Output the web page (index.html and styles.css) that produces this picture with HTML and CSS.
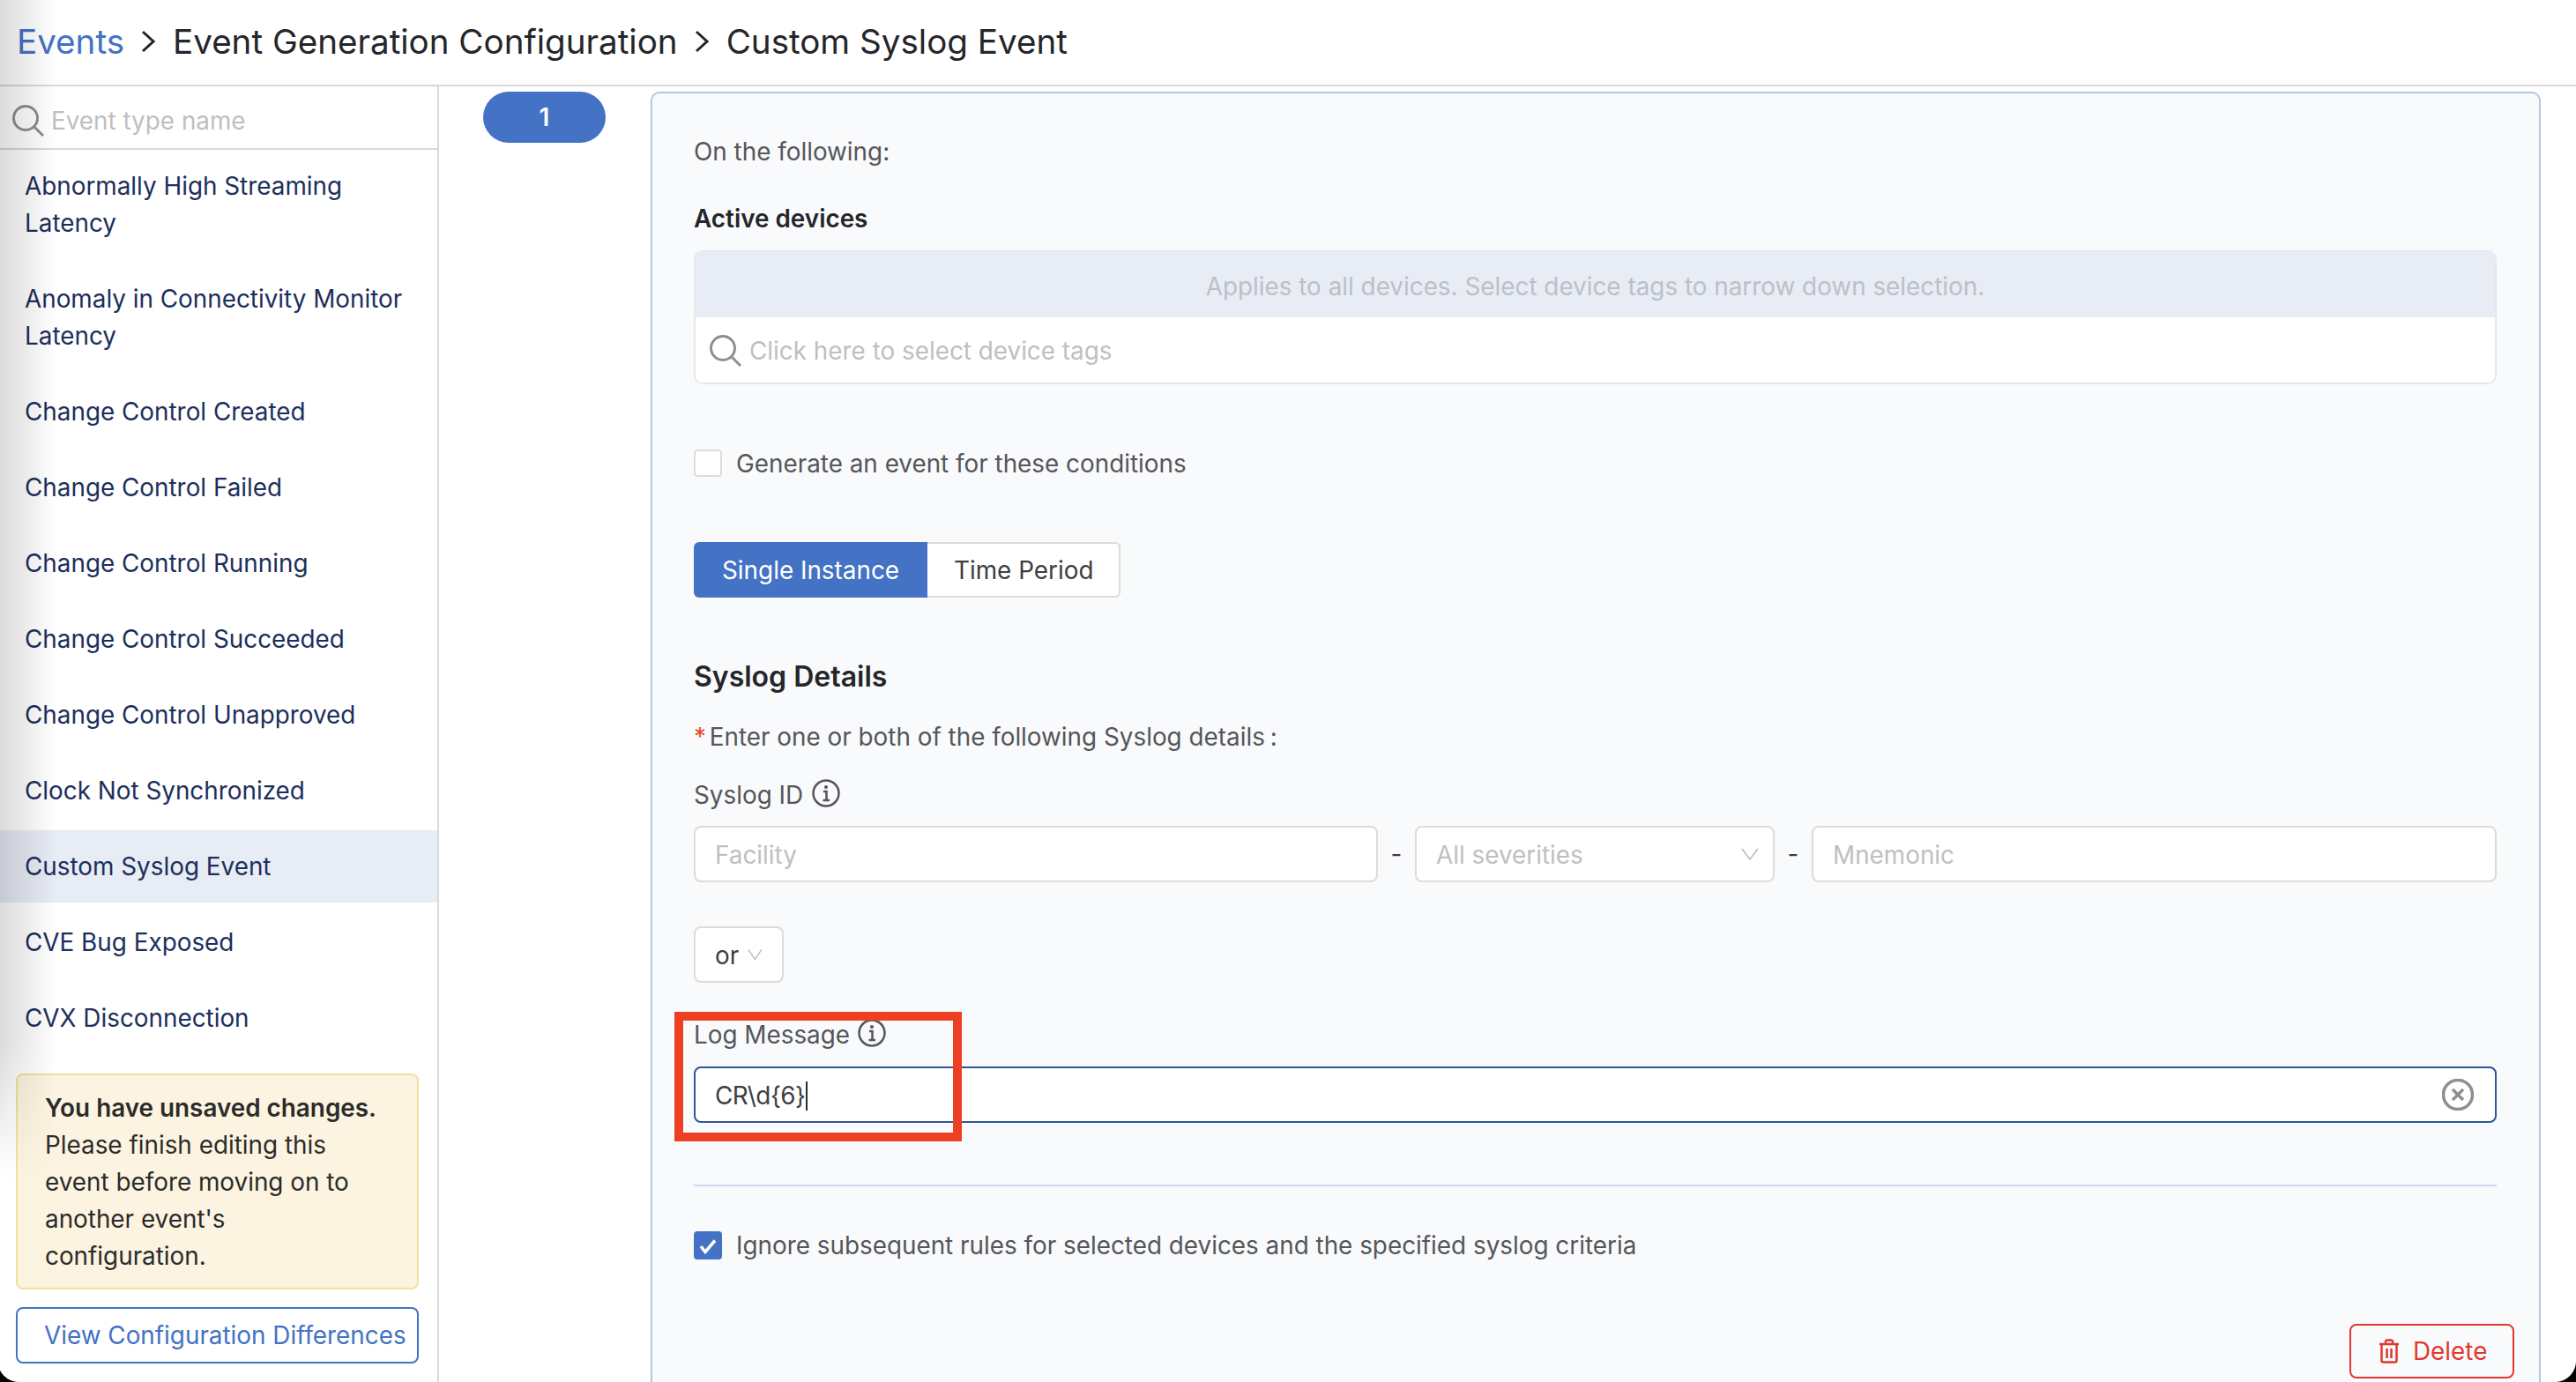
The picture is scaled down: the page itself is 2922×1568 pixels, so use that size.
FILE: index.html
```html
<!DOCTYPE html>
<html>
<head>
  <meta charset="utf-8">
  <title>Custom Syslog Event</title>
  <link rel="stylesheet" href="styles.css">
</head>
<body>
  <div class="app">
    <div class="crumbs">
      <span class="crumb-link">Events</span>
      <svg class="crumb-sep" viewBox="0 0 16 26"><path d="M2 2l12 11L2 24"/></svg>
      <span>Event Generation Configuration</span>
      <svg class="crumb-sep" viewBox="0 0 16 26"><path d="M2 2l12 11L2 24"/></svg>
      <span>Custom Syslog Event</span>
    </div>

    <div class="main">
      <div class="sidebar">
        <div class="side-search">
          <svg class="search-icon" viewBox="0 0 36 36"><circle cx="15" cy="15" r="13.5"/><path d="M25 25l10 10"/></svg>
          <span class="placeholder">Event type name</span>
        </div>
        <div class="event-list">
          <div class="event-row">Abnormally High Streaming Latency</div>
          <div class="event-row">Anomaly in Connectivity Monitor Latency</div>
          <div class="event-row">Change Control Created</div>
          <div class="event-row">Change Control Failed</div>
          <div class="event-row">Change Control Running</div>
          <div class="event-row">Change Control Succeeded</div>
          <div class="event-row">Change Control Unapproved</div>
          <div class="event-row">Clock Not Synchronized</div>
          <div class="event-row selected">Custom Syslog Event</div>
          <div class="event-row">CVE Bug Exposed</div>
          <div class="event-row">CVX Disconnection</div>
        </div>
        <div class="notice">
          <b>You have unsaved changes.</b><br>
          Please finish editing this event before moving on to another event's configuration.
        </div>
        <div class="diff-btn">View Configuration Differences</div>
      </div>

      <div class="steps">
        <div class="step-pill">1</div>
      </div>

      <div class="panel">
        <div class="line">On the following:</div>
        <div class="line strong active-title">Active devices</div>

        <div class="device-box">
          <div class="device-hint">Applies to all devices. Select device tags to narrow down selection.</div>
          <div class="device-search">
            <svg class="search-icon" viewBox="0 0 36 36"><circle cx="15" cy="15" r="13.5"/><path d="M25 25l10 10"/></svg>
            <span class="placeholder">Click here to select device tags</span>
          </div>
        </div>

        <div class="check-row generate-row">
          <span class="checkbox"></span>
          <span>Generate an event for these conditions</span>
        </div>

        <div class="toggle">
          <div class="toggle-on">Single Instance</div>
          <div class="toggle-off">Time Period</div>
        </div>

        <div class="section-title">Syslog Details</div>
        <div class="line required-line"><span class="star">*</span> Enter one or both of the following Syslog details<span class="colon">:</span></div>

        <div class="line field-label syslog-label">
          Syslog ID
          <svg class="info" viewBox="0 0 32 32"><circle cx="16" cy="16" r="14.5"/><circle class="info-dot" cx="16" cy="9" r="2"/><path d="M13 14h3.500v10M12.500 24h7.500"/></svg>
        </div>

        <div class="syslog-fields">
          <div class="input grow"><span class="placeholder">Facility</span></div>
          <span class="dash">-</span>
          <div class="input severity">
            <span class="placeholder">All severities</span>
            <svg class="chevron" viewBox="0 0 20 14"><path d="M1 1l9 12 9-12"/></svg>
          </div>
          <span class="dash">-</span>
          <div class="input mnemonic"><span class="placeholder">Mnemonic</span></div>
        </div>

        <div class="input or-select">
          <span>or</span>
          <svg class="chevron small" viewBox="0 0 18 14"><path d="M1 1l8 12 8-12"/></svg>
        </div>

        <div class="log-field">
          <div class="line field-label log-label">
            Log Message
            <svg class="info" viewBox="0 0 32 32"><circle cx="16" cy="16" r="14.5"/><circle class="info-dot" cx="16" cy="9" r="2"/><path d="M13 14h3.500v10M12.500 24h7.500"/></svg>
          </div>
          <div class="input focused">
            <span class="log-value">CR\d{6}</span><span class="caret"></span>
            <svg class="clear-icon" viewBox="0 0 36 36"><circle cx="18" cy="18" r="16.500"/><path d="M12 12l12 12M24 12L12 24"/></svg>
          </div>
          <div class="callout"></div>
        </div>

        <div class="divider"></div>

        <div class="check-row ignore-row">
          <span class="checkbox checked">
            <svg viewBox="0 0 32 32"><path d="M8 17l5 6.500 11-13"/></svg>
          </span>
          <span>Ignore subsequent rules for selected devices and the specified syslog criteria</span>
        </div>

        <div class="delete-wrap">
          <div class="delete-btn">
            <svg class="trash" viewBox="0 0 24 28"><path d="M1 6h22M8 6V3.500C8 2 9 1.500 10 1.500h4c1 0 2 .5 2 2V6M3.500 6v18.500c0 1 .7 2 2 2h13c1.300 0 2-1 2-2V6M9.500 11v11M14.500 11v11"/></svg>
            <span>Delete</span>
          </div>
        </div>
      </div>
    </div>
  </div>

  <div class="edge-shadow"></div>
  <div class="corner corner-left"></div>
  <div class="corner corner-right"></div>
</body>
</html>
```

FILE: styles.css
```css
* { box-sizing: border-box; }

html, body {
  margin: 0;
  height: 100%;
  overflow: hidden;
  background: #fff;
}

body {
  position: relative;
  font-family: "Inter", "Liberation Sans", sans-serif;
  font-size: 27.85px;
  line-height: 42px;
  color: #55565a;
}

.app {
  display: flex;
  flex-direction: column;
  height: 1568px;
}

/* breadcrumb */
.crumbs {
  display: flex;
  align-items: center;
  height: 98px;
  padding: 0 0 2px 19px;
  border-bottom: 2px solid #d9d9d9;
  font-size: 38.6px;
  color: #25262a;
}
.crumb-link { color: #4472c4; }
.crumb-sep {
  width: 16px;
  height: 26px;
  margin: 0 20px 0 19px;
  fill: none;
  stroke: #25262a;
  stroke-width: 3;
}

.main {
  display: flex;
  flex: 1;
  min-height: 0;
  overflow: hidden;
}

/* left column */
.sidebar {
  display: flex;
  flex-direction: column;
  flex: 0 0 498px;
  padding-bottom: 21px;
  border-right: 2px solid #d9d9d9;
}
.side-search {
  display: flex;
  align-items: center;
  flex: 0 0 72px;
  padding: 8px 0 0 14px;
  border-bottom: 2px solid #d9d9d9;
}
.search-icon {
  width: 36px;
  height: 36px;
  fill: none;
  stroke: #8f8f8f;
  stroke-width: 3;
}
.side-search .placeholder { margin-left: 8px; }
.placeholder { color: #bfbfbf; }

.event-list {
  display: flex;
  flex-direction: column;
  flex: 1;
  gap: 4px;
  overflow: hidden;
}
.event-row {
  padding: 20px 28px;
  color: #1c2f5c;
}
.event-row.selected { background: #e8ecf5; }

.notice {
  margin: 0 21px 0 18px;
  padding: 16px 28px 15px 31px;
  background: #fcf4e0;
  border: 2px solid #f3e09c;
  border-radius: 8px;
  color: #2b2b2b;
}
.notice b { font-weight: 600; }

.diff-btn {
  display: flex;
  align-items: center;
  height: 64px;
  margin: 20px 21px 0 18px;
  padding-left: 30px;
  border: 2px solid #4472c4;
  border-radius: 8px;
  color: #4472c4;
  white-space: nowrap;
}

/* step column */
.steps {
  flex: 0 0 240px;
  padding: 6px 0 0 50px;
}
.step-pill {
  display: flex;
  align-items: center;
  justify-content: center;
  width: 139px;
  height: 58px;
  border-radius: 29px;
  background: #4472c4;
  color: #fff;
  font-weight: 600;
}

/* main panel */
.panel {
  flex: 0 0 1144px;
  flex-grow: 1;
  height: 1500px;
  margin: 6px 40px 0 0;
  padding: 45px 48px 0 47px;
  background: #f9fafc;
  border: 2px solid #b3c6e8;
  border-radius: 10px;
}
.strong { font-weight: 600; color: #25262a; }
.active-title { margin-top: 34px; }

.device-box {
  margin-top: 15px;
  height: 152px;
  border: 2px solid #e6e8ec;
  border-radius: 10px;
  background: #fff;
  overflow: hidden;
}
.device-hint {
  height: 74px;
  padding-top: 18px;
  background: #e8ecf5;
  color: #bcc0c8;
  text-align: center;
}
.device-search {
  display: flex;
  align-items: center;
  height: 74px;
  padding: 2px 0 0 16px;
}
.device-search .placeholder { margin-left: 9px; }

.check-row {
  display: flex;
  align-items: center;
  gap: 16px;
}
.generate-row { margin-top: 74px; height: 31px; }
.checkbox {
  flex: 0 0 32px;
  height: 31px;
  background: #fff;
  border: 2px solid #dcdcdc;
  border-radius: 4px;
}
.checkbox.checked {
  height: 32px;
  background: #4472c4;
  border: 0;
}
.checkbox svg {
  display: block;
  width: 32px;
  height: 32px;
  fill: none;
  stroke: #fff;
  stroke-width: 3.500;
}

.toggle {
  display: flex;
  height: 63px;
  margin-top: 74px;
}
.toggle-on {
  display: flex;
  align-items: center;
  width: 265px;
  padding-left: 32px;
  background: #4472c4;
  border-radius: 6px 0 0 6px;
  color: #fff;
}
.toggle-off {
  display: flex;
  align-items: center;
  width: 219px;
  padding-left: 30px;
  background: #fff;
  border: 2px solid #dcdcdc;
  border-left: 0;
  border-radius: 0 6px 6px 0;
  color: #3d3e42;
}

.section-title {
  margin-top: 68px;
  font-size: 32px;
  line-height: 44px;
  font-weight: 600;
  color: #25262a;
}
.required-line { margin-top: 25px; }
.star { color: #e8472b; margin-right: -4px; }
.colon { margin-left: 6px; }

.field-label {
  display: flex;
  align-items: center;
  gap: 10px;
}
.syslog-label { margin-top: 24px; }
.info {
  width: 32px;
  height: 32px;
  margin-top: -4px;
  fill: none;
  stroke: #55565a;
  stroke-width: 2.500;
}
.info-dot { fill: #55565a; stroke: none; }

.syslog-fields {
  display: flex;
  align-items: center;
  margin-top: 14px;
}
.input {
  display: flex;
  align-items: center;
  height: 64px;
  padding: 2px 22px 0;
  background: #fff;
  border: 2px solid #dcdcdc;
  border-radius: 8px;
}
.input svg { margin-top: -2px; }
.grow { flex: 0 0 776px; }
.severity {
  flex: 0 0 408px;
  justify-content: space-between;
  padding-right: 16px;
}
.mnemonic { flex: 1; }
.dash {
  flex: 0 0 42px;
  text-align: center;
  color: #3d3e42;
}
.chevron {
  width: 20px;
  height: 14px;
  fill: none;
  stroke: #b9b9b9;
  stroke-width: 1.500;
}
.chevron.small { width: 18px; margin-left: 10px; }

.or-select {
  width: 102px;
  margin-top: 50px;
  color: #3d3e42;
}

.log-field {
  position: relative;
  margin-top: 38px;
}
.log-label { gap: 9px; }
.focused {
  margin-top: 15px;
  border-color: #2f5597;
  color: #3d3e42;
}
.log-value { letter-spacing: -.5px; }
.caret {
  width: 2px;
  height: 33px;
  margin-left: 1px;
  background: #2b2b2b;
}
.clear-icon {
  width: 36px;
  height: 36px;
  margin-left: auto;
  margin-right: 2px;
  fill: none;
  stroke: #8f8f8f;
  stroke-width: 3.500;
}
/* red annotation drawn on the shot */
.callout {
  position: absolute;
  top: -5px;
  left: -22px;
  width: 326px;
  height: 147px;
  border: 10px solid #ec3f24;
  pointer-events: none;
}

.divider {
  height: 2px;
  margin-top: 70px;
  background: #cdd9f1;
}
.ignore-row { margin-top: 46px; }

.delete-wrap {
  display: flex;
  justify-content: flex-end;
  margin: 68px -20px 0 0;
}
.delete-btn {
  display: flex;
  align-items: center;
  width: 187px;
  height: 62px;
  padding-left: 31px;
  border: 2px solid #e0392b;
  border-radius: 8px;
  color: #e0392b;
}
.trash {
  width: 24px;
  height: 28px;
  margin-right: 15px;
  fill: none;
  stroke: #e0392b;
  stroke-width: 2.500;
}

/* window shadow and rounded corners of the shot */
.edge-shadow {
  position: absolute;
  top: 0;
  left: 0;
  width: 64px;
  height: 1340px;
  background: linear-gradient(to right, rgba(0, 0, 0, .14), rgba(0, 0, 0, 0));
  -webkit-mask-image: linear-gradient(to bottom, #000 1180px, transparent 100%);
  mask-image: linear-gradient(to bottom, #000 1180px, transparent 100%);
  pointer-events: none;
}
.corner {
  position: absolute;
  bottom: 0;
  height: 24px;
  pointer-events: none;
}
.corner-left {
  left: 0;
  width: 22px;
  background: radial-gradient(circle 25px at 21.500px 0, transparent 23.500px, #000 24.500px);
}
.corner-right {
  right: 0;
  width: 24px;
  background: radial-gradient(circle 25px at 0 0, transparent 23.500px, #000 24.500px);
}
```
